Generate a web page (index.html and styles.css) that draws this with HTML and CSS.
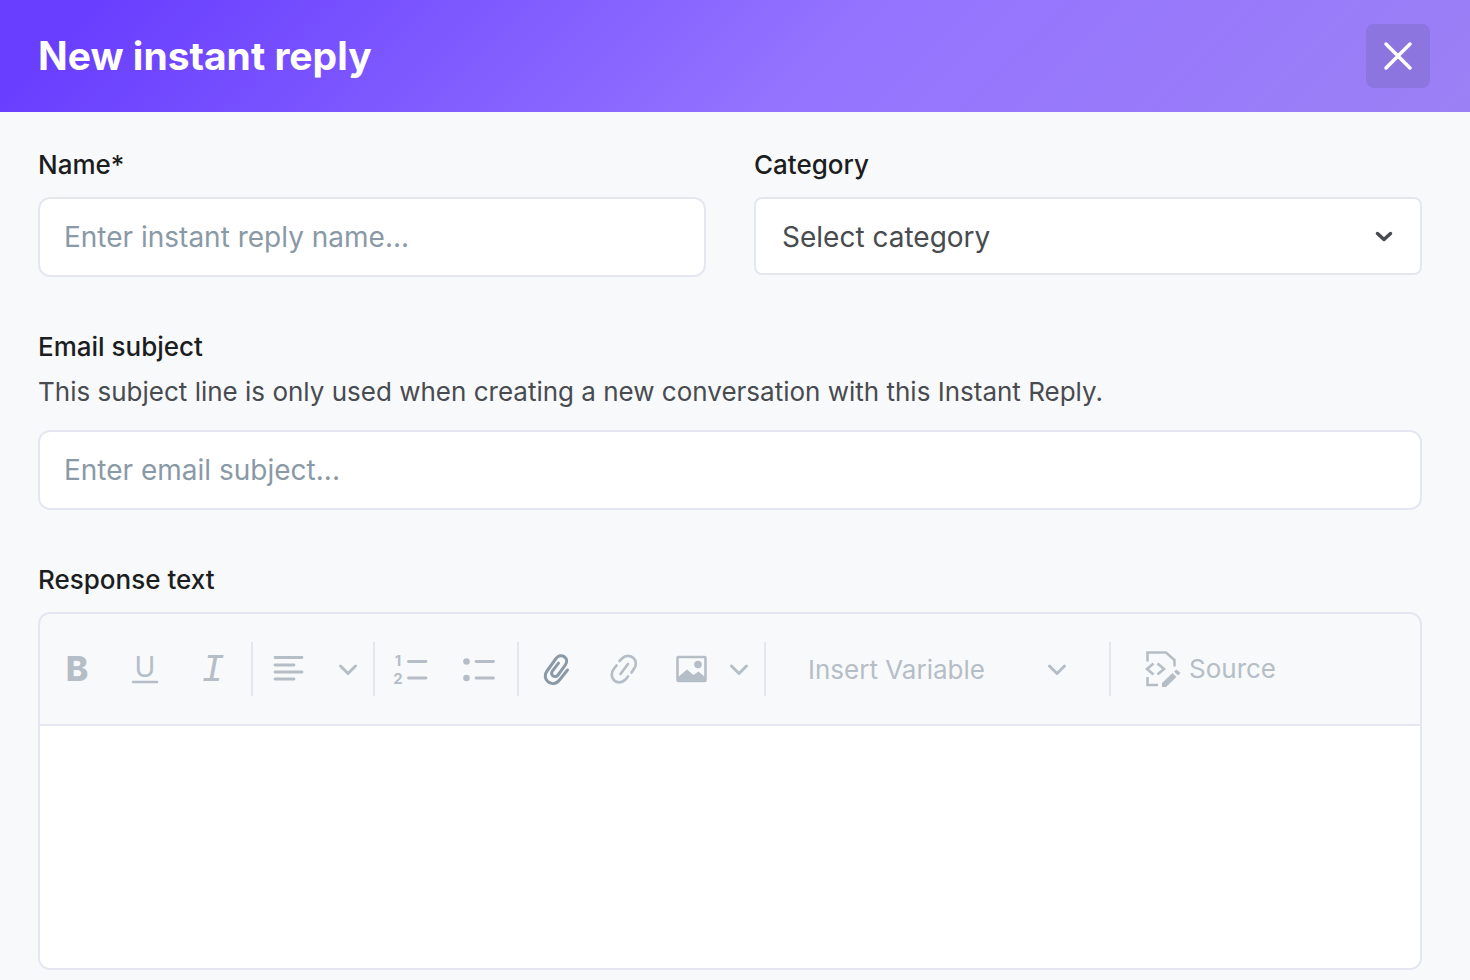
FILE: index.html
```html
<!DOCTYPE html>
<html lang="en">
<head>
  <meta charset="UTF-8">
  <meta name="viewport" content="width=device-width, initial-scale=1.0">
  <title>New instant reply</title>
  <link rel="stylesheet" href="styles.css">
</head>
<body>
  <header class="modal-header">
    <h1>New instant reply</h1>
    <button type="button" class="close-button" aria-label="Close">
      <svg width="32" height="32" viewBox="0 0 32 32"><path d="M4 4L28 28M28 4L4 28"/></svg>
    </button>
  </header>

  <form class="reply-form">
    <div class="form-row">
      <div class="field">
        <label for="replyName">Name*</label>
        <input type="text" id="replyName" class="text-input" placeholder="Enter instant reply name...">
      </div>
      <div class="field">
        <label for="category">Category</label>
        <div class="select-wrap">
          <select id="category" class="category-select">
            <option>Select category</option>
          </select>
          <svg class="select-arrow" width="20" height="20" viewBox="0 0 20 20"><path d="M3.500 7.500L10 13.500L16.500 7.500"/></svg>
        </div>
      </div>
    </div>

    <div class="field">
      <label for="emailSubject">Email subject</label>
      <p class="hint" id="subjectHint">This subject line is only used when creating a new conversation with this Instant Reply.</p>
      <input type="text" id="emailSubject" class="text-input" aria-describedby="subjectHint" placeholder="Enter email subject...">
    </div>

    <div class="field">
      <label for="responseText">Response text</label>
      <div class="editor">
        <div class="toolbar">
          <button type="button" class="tool" aria-label="Bold">
            <svg width="36" height="52" viewBox="0 0 36 52"><text class="glyph-bold" x="18" y="38" text-anchor="middle">B</text></svg>
          </button>
          <button type="button" class="tool" aria-label="Underline">
            <svg width="36" height="52" viewBox="0 0 36 52">
              <text class="glyph-underline" x="18" y="34" text-anchor="middle">U</text>
              <path d="M6 39H30" stroke-width="2.600"/>
            </svg>
          </button>
          <button type="button" class="tool" aria-label="Italic">
            <svg width="36" height="52" viewBox="0 0 36 52"><text class="glyph-italic" x="18" y="38" text-anchor="middle">I</text></svg>
          </button>
          <span class="separator"></span>

          <button type="button" class="tool" aria-label="Align">
            <svg width="36" height="36" viewBox="0 0 36 36"><path d="M4 6.500H31M4 14H23M4 21H31M4 28H23" stroke-width="2.800"/></svg>
          </button>
          <button type="button" class="caret caret-align" aria-label="Align options">
            <svg width="20" height="20" viewBox="0 0 20 20"><path d="M2.500 7L10 14.500L17.500 7" stroke-width="3"/></svg>
          </button>
          <span class="separator"></span>

          <button type="button" class="tool" aria-label="Numbered list">
            <svg width="36" height="52" viewBox="0 0 36 52">
              <text class="glyph-number" x="5" y="23" text-anchor="middle">1</text>
              <text class="glyph-number" x="5" y="41" text-anchor="middle">2</text>
              <path d="M15.500 18.500H33M15.500 35H33" stroke-width="2.800"/>
            </svg>
          </button>
          <button type="button" class="tool" aria-label="Bulleted list">
            <svg width="36" height="52" viewBox="0 0 36 52">
              <circle class="solid" cx="5.500" cy="18.500" r="3.300"/>
              <circle class="solid" cx="5.500" cy="35" r="3.300"/>
              <path d="M15 18.500H32.500M15 35H32.500" stroke-width="2.800"/>
            </svg>
          </button>
          <span class="separator"></span>

          <button type="button" class="tool tool-active" aria-label="Attach file">
            <svg width="36" height="36" viewBox="0 0 36 36"><path d="M30.500 19L22.500 29C19.500 33 15 33.500 11.300 31C7.600 28.200 7.300 23.500 10 20L19 7.500C21 4.500 24.500 3.800 27.300 5.800C30 7.800 30.400 11 28.300 14L21 24C19.700 25.700 17.500 26 15.900 24.800C14.300 23.600 14.200 21.600 15.500 19.900L21.500 12.200" stroke-width="3"/></svg>
          </button>
          <button type="button" class="tool" aria-label="Insert link">
            <svg width="36" height="36" viewBox="0 0 36 36"><path d="M14.500 10L17 7.500C20.500 4 25.500 4 28.500 7C31.500 10 31.500 14.500 28.800 18L26.500 21.500M11.500 14.500L8.800 18C6 21.500 6 26.200 9 29.200C12 32.200 17 32 20.200 28.800L23 25.500M23 13L15.500 23" stroke-width="2.700"/></svg>
          </button>
          <button type="button" class="tool" aria-label="Insert image">
            <svg width="36" height="36" viewBox="0 0 36 36">
              <rect x="4.500" y="6" width="28" height="24" rx="1" stroke-width="2.600"/>
              <circle class="solid" cx="25" cy="13.500" r="3.800"/>
              <path class="solid" d="M4.500 26.500L14 18.500L20.500 24L25.500 20.500L32.500 26.500V30H4.500Z"/>
            </svg>
          </button>
          <button type="button" class="caret caret-image" aria-label="Image options">
            <svg width="20" height="20" viewBox="0 0 20 20"><path d="M2.500 7L10 14.500L17.500 7" stroke-width="3"/></svg>
          </button>
          <span class="separator"></span>

          <div class="variable-wrap">
            <select class="variable-select" aria-label="Insert Variable">
              <option>Insert Variable</option>
            </select>
            <svg class="variable-arrow" width="20" height="20" viewBox="0 0 20 20"><path d="M2.500 7L10 14.500L17.500 7" stroke-width="3"/></svg>
          </div>
          <span class="separator"></span>

          <button type="button" class="source-button">
            <svg width="36" height="40" viewBox="0 0 36 40">
              <path class="square" d="M2.500 12.500V3.500H21L29.500 11V17.500M2.500 28V36H13" stroke-width="2.600"/>
              <path class="square" d="M8.500 14.500L2 20L8.500 25.500M12.500 14.500L19 20L12.500 25.500" stroke-width="2.600"/>
              <path class="solid" d="M17 34L27.500 24L31.500 28L21 38H17Z"/>
              <path class="solid" d="M29 22.500L31.500 20.500L35.500 24L33 26.500Z"/>
            </svg>
            <span>Source</span>
          </button>
        </div>
        <textarea id="responseText" class="editor-body"></textarea>
      </div>
    </div>
  </form>
</body>
</html>
```
FILE: styles.css
```css
:root {
  --text-primary: #1B1D20;
  --text-secondary: #484B50;
  --placeholder: #8A99A6;
  --disabled: #B5BEC6;
  --background: #F8F9FB;
  --border: #E4E7EF;
}

* {
  box-sizing: border-box;
}

body {
  margin: 0;
  background-color: var(--background);
  color: var(--text-primary);
  font-family: Inter, sans-serif;
  font-size: 26px;
  line-height: 36px;
}

button,
input,
select,
textarea {
  font: inherit;
  margin: 0;
}

button {
  display: flex;
  align-items: center;
  justify-content: center;
  padding: 0;
  border: none;
  background: none;
  color: inherit;
  cursor: pointer;
}

svg {
  flex: none;
  fill: none;
  stroke: currentColor;
  stroke-linecap: round;
  stroke-linejoin: round;
}

.modal-header {
  display: flex;
  align-items: center;
  justify-content: space-between;
  height: 112px;
  padding: 0 40px 0 38px;
  background: linear-gradient(135deg, #693EFF 0%, #693EFF 6%, #9474FF 56%, #9B80F5 100%);
  color: #FFFFFF;
}

.modal-header h1 {
  margin: 0;
  font-size: 39px;
  font-weight: 700;
  line-height: 48px;
}

.close-button {
  width: 64px;
  height: 64px;
  border-radius: 8px;
  background-color: #8D75E0;
}

.close-button svg {
  stroke-width: 3.5;
}

.reply-form {
  padding: 35px 48px 10px 38px;
}

.form-row {
  display: grid;
  grid-template-columns: 1fr 1fr;
  gap: 48px;
}

.form-row,
.reply-form > .field {
  margin-bottom: 52px;
}

.reply-form > .field:last-child {
  margin-bottom: 0;
}

.field label {
  display: block;
  margin-bottom: 14px;
  font-weight: 500;
}

.hint {
  margin: -5px 0 20px;
  color: var(--text-secondary);
}

.text-input,
.category-select {
  display: block;
  width: 100%;
  border: 2px solid var(--border);
  background-color: #FFFFFF;
  font-size: 28px;
}

.text-input {
  height: 80px;
  padding: 0 24px;
  border-radius: 12px;
}

.text-input::placeholder {
  color: var(--placeholder);
  opacity: 1;
}

.category-select {
  height: 78px;
  padding: 2px 64px 0 26px;
  border-radius: 8px;
  color: var(--text-secondary);
  appearance: none;
}

.select-wrap,
.variable-wrap {
  position: relative;
}

.select-arrow,
.variable-arrow {
  position: absolute;
  top: 50%;
  margin-top: -10px;
  pointer-events: none;
}

.select-arrow {
  right: 28px;
  color: var(--text-secondary);
  stroke-width: 3.5;
}

.editor {
  border: 2px solid var(--border);
  border-radius: 12px;
  overflow: hidden;
}

.toolbar {
  display: flex;
  align-items: center;
  height: 112px;
  padding-left: 3px;
  border-bottom: 2px solid var(--border);
  color: var(--disabled);
}

.tool {
  width: 68px;
  height: 52px;
}

.tool-active {
  color: var(--placeholder);
}

.caret {
  width: 28px;
  height: 52px;
}

.caret-align {
  margin: 0 7px 0 11px;
}

.caret-image {
  margin-right: 7px;
}

.separator {
  width: 2px;
  height: 54px;
  margin: 0 2px 0 4px;
  background-color: var(--border);
}

.toolbar text,
.solid {
  fill: currentColor;
  stroke: none;
}

.square {
  stroke-linecap: butt;
  stroke-linejoin: miter;
}

.glyph-bold {
  font-size: 34px;
  font-weight: 800;
}

.glyph-underline {
  font-size: 28px;
}

.glyph-italic {
  font-family: "Liberation Mono", monospace;
  font-size: 38px;
  font-style: italic;
}

.glyph-number {
  font-size: 15px;
  font-weight: 700;
}

.variable-wrap {
  width: 337px;
}

.variable-select {
  width: 100%;
  height: 52px;
  padding: 2px 80px 0 40px;
  border: none;
  background: none;
  color: inherit;
  appearance: none;
}

.variable-arrow {
  right: 38px;
}

.source-button {
  gap: 8px;
  height: 52px;
  padding: 0 32px;
}

.editor-body {
  display: block;
  width: 100%;
  height: 242px;
  padding: 24px;
  border: none;
  background-color: #FFFFFF;
  resize: none;
}
```
